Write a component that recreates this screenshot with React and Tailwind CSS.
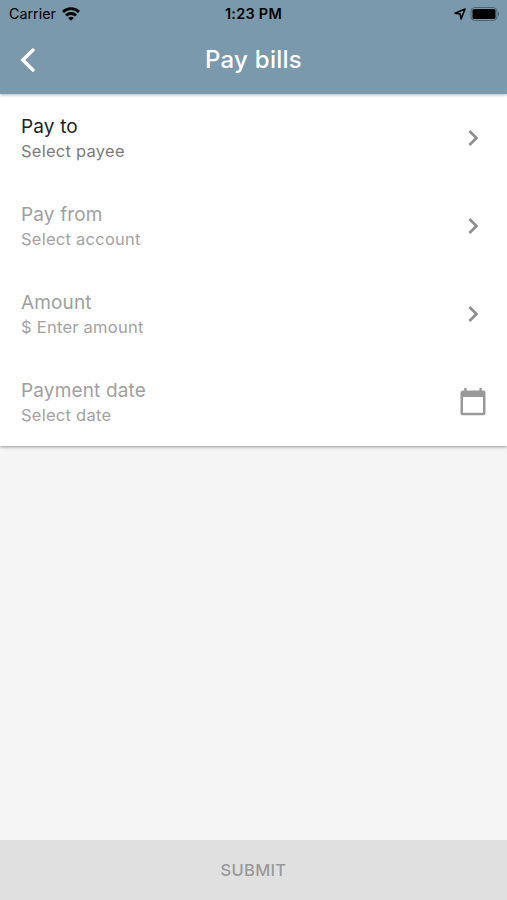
const rows = [
    {title: "Pay to", hint: "Select payee", active: true},
    {title: "Pay from", hint: "Select account"},
    {title: "Amount", hint: "$ Enter amount"},
    {title: "Payment date", hint: "Select date", calendar: true},
];

const StatusBar = () => (
    <div className="h-[27px] flex items-center justify-between pl-[9px] pr-[7px] text-black">
        <div className="flex-1 flex items-center gap-[6px] text-[14.3px]">
            <span>Carrier</span>
            <svg width="18" height="14" viewBox="0 0 18 14" fill="none" stroke="currentColor" strokeWidth="2.8">
                <path d="M1 5a11.4 11.4 0 0 1 16 0" />
                <path d="M4 8.5a7.2 7.2 0 0 1 10 0" />
                <path d="M9 13.8l-2.8-2.9a3.9 3.9 0 0 1 5.6 0z" fill="currentColor" stroke="none" />
            </svg>
        </div>
        <span className="mr-[2px] text-[14.5px] font-semibold tracking-[0.25px]">1:23 PM</span>
        <div className="flex-1 flex items-center justify-end gap-[4px]">
            <svg width="12" height="12" viewBox="0 0 12 12" fill="none" stroke="currentColor" strokeWidth="1.5" strokeLinejoin="round">
                <path d="M11 1L1 5.2l5.2.9.9 4.9z" />
            </svg>
            <svg width="30" height="14" viewBox="0 0 30 14">
                <rect x="1" y="0.5" width="26" height="13" rx="3.8" fill="none" stroke="#000" strokeOpacity="0.35" />
                <rect x="2.5" y="2" width="23" height="10" rx="1.6" fill="#000" />
                <path d="M28 4.5q2 2.5 0 5z" fill="#000" fillOpacity="0.4" />
            </svg>
        </div>
    </div>
);

const Chevron = () => (
    <svg width="32" height="32" viewBox="0 0 24 24" className="mr-[-3px]" fill="#8e8e8e">
        <path d="M10 6L8.59 7.41 13.17 12l-4.58 4.59L10 18l6-6z" />
    </svg>
);

const Calendar = () => (
    <svg width="26" height="28" viewBox="0 0 26 28">
        <path
            d="M4.2 0h2.4v2.6h12.8V0h2.4v2.6h1.1a2.6 2.6 0 0 1 2.6 2.6v19.5a2.6 2.6 0 0 1-2.6 2.6H3.1a2.6 2.6 0 0 1-2.6-2.6V5.2a2.6 2.6 0 0 1 2.6-2.6h1.1zM3 9v15.8h20V9z"
            fill="#999"
            fillRule="evenodd"
        />
    </svg>
);

const Row = ({title, hint, active, calendar}) => (
    <button
        type="button"
        className="w-full h-[88px] pl-[21px] pr-[21px] flex items-center justify-between text-left"
    >
        <span className="flex flex-col">
            <span
                className={`pt-px text-[19px] leading-[25px] tracking-[0.15px] ${active ? "text-[#222222]" : "text-[#9f9f9f]"}`}
            >
                {title}
            </span>
            <span
                className={`text-[16.5px] leading-[24px] tracking-[0.25px] ${active ? "text-[#7b7b7b]" : "text-[#a2a2a2]"}`}
            >
                {hint}
            </span>
        </span>
        {calendar ? <Calendar /> : <Chevron />}
    </button>
);

const App = () => {
    return (
        <div className="w-full h-screen flex flex-col overflow-hidden bg-[#f5f5f5] font-['Inter',sans-serif]">
            <header className="h-[94px] shrink-0 relative z-10 bg-[#7a99ac] shadow-[0_1px_3px_rgba(0,0,0,0.3)]">
                <StatusBar />
                <div className="h-[66px] grid grid-cols-[60px_1fr_60px] items-center text-white">
                    <button type="button" className="pl-[20px]">
                        <svg width="16" height="25" viewBox="0 0 16 25" fill="none" stroke="currentColor" strokeWidth="3.4" strokeLinecap="round">
                            <path d="M13 2L2.8 12l10.2 10" />
                        </svg>
                    </button>
                    <h1 className="text-center text-[24px] font-medium tracking-[0.25px]">Pay bills</h1>
                </div>
            </header>
            <main className="flex-1">
                <div className="bg-white shadow-[0_1px_3px_rgba(0,0,0,0.4)]">
                    {rows.map((row) => (
                        <Row key={row.title} {...row} />
                    ))}
                </div>
            </main>
            <button
                type="button"
                className="h-[60px] shrink-0 bg-[#e0e0e0] text-[#999999] text-[16.5px] font-medium tracking-[0.3px]"
            >
                SUBMIT
            </button>
        </div>
    );
};

export default App;
